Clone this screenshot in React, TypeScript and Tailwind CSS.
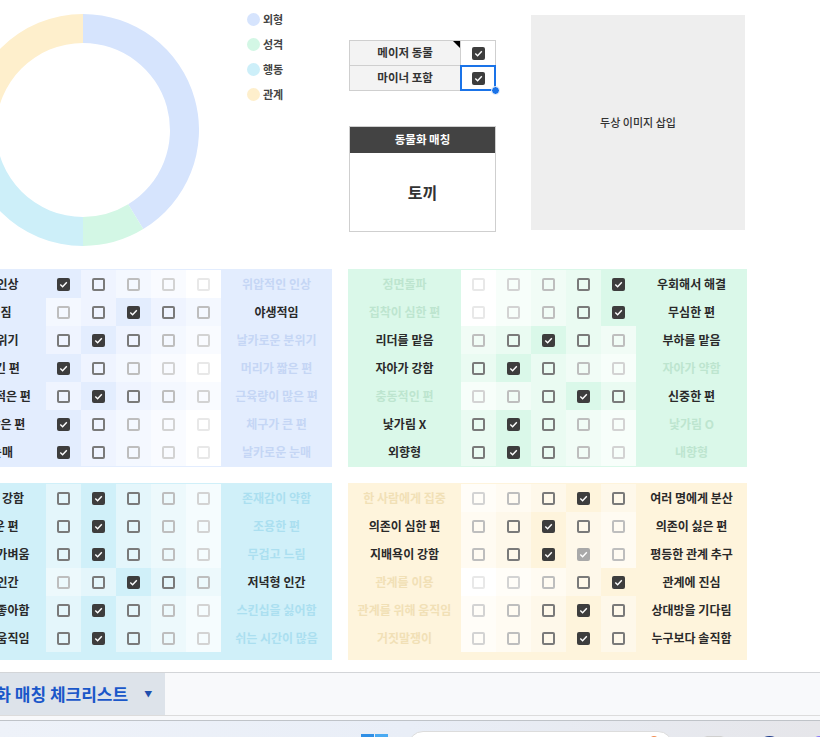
import React from "react";

type Row = { left: string; right: string; pick: number; ghost?: number };

type Tone = { block: string; faded: string; cell: string[] };

const TONES: Record<string, Tone> = {
  blue: {
    block: "bg-[#e3edfe]",
    faded: "text-[#c5d6f5]",
    cell: ["bg-[#e3edfe]", "bg-[#eff4ff]", "bg-[#f4f8ff]", "bg-[#f9fbff]", "bg-white"],
  },
  green: {
    block: "bg-[#daf8e9]",
    faded: "text-[#bde5cf]",
    cell: ["bg-[#daf8e9]", "bg-[#eafbf2]", "bg-[#f1fcf6]", "bg-[#f7fefa]", "bg-white"],
  },
  cyan: {
    block: "bg-[#d0f0f9]",
    faded: "text-[#abdff0]",
    cell: ["bg-[#d0f0f9]", "bg-[#e4f6fb]", "bg-[#edf9fc]", "bg-[#f5fcfe]", "bg-white"],
  },
  yellow: {
    block: "bg-[#fef4dc]",
    faded: "text-[#f1e0b6]",
    cell: ["bg-[#fef4dc]", "bg-[#fef8ea]", "bg-[#fffbf2]", "bg-[#fffdf8]", "bg-white"],
  },
};

// 체크 거리별 테두리 색
const EDGE = ["", "border-[#7a7a7a]", "border-[#bebebe]", "border-[#d3d3d3]", "border-[#e8e8e8]"];

const LOOKS: Row[] = [
  { left: "귀여운 인상", right: "위압적인 인상", pick: 0 },
  { left: "길들여짐", right: "야생적임", pick: 2 },
  { left: "순한 분위기", right: "날카로운 분위기", pick: 1 },
  { left: "머리가 긴 편", right: "머리가 짧은 편", pick: 0 },
  { left: "근육량이 적은 편", right: "근육량이 많은 편", pick: 1 },
  { left: "체구가 작은 편", right: "체구가 큰 편", pick: 0 },
  { left: "둥근 눈매", right: "날카로운 눈매", pick: 0 },
];

const NATURE: Row[] = [
  { left: "정면돌파", right: "우회해서 해결", pick: 4 },
  { left: "집착이 심한 편", right: "무심한 편", pick: 4 },
  { left: "리더를 맡음", right: "부하를 맡음", pick: 2 },
  { left: "자아가 강함", right: "자아가 약함", pick: 1 },
  { left: "충동적인 편", right: "신중한 편", pick: 3 },
  { left: "낯가림 X", right: "낯가림 O", pick: 1 },
  { left: "외향형", right: "내향형", pick: 1 },
];

const ACTION: Row[] = [
  { left: "존재감이 강함", right: "존재감이 약함", pick: 1 },
  { left: "시끄러운 편", right: "조용한 편", pick: 1 },
  { left: "재빠르고 가벼움", right: "무겁고 느림", pick: 1 },
  { left: "아침형 인간", right: "저녁형 인간", pick: 2 },
  { left: "스킨십을 좋아함", right: "스킨십을 싫어함", pick: 1 },
  { left: "부지런히 움직임", right: "쉬는 시간이 많음", pick: 1 },
];

const BOND: Row[] = [
  { left: "한 사람에게 집중", right: "여러 명에게 분산", pick: 3 },
  { left: "의존이 심한 편", right: "의존이 싫은 편", pick: 2 },
  { left: "지배욕이 강함", right: "평등한 관계 추구", pick: 2, ghost: 3 },
  { left: "관계를 이용", right: "관계에 진심", pick: 4 },
  { left: "관계를 위해 움직임", right: "상대방을 기다림", pick: 3 },
  { left: "거짓말쟁이", right: "누구보다 솔직함", pick: 3 },
];

const LEGEND = [
  { label: "외형", dot: "bg-[#d6e4fd]" },
  { label: "성격", dot: "bg-[#d3f7e5]" },
  { label: "행동", dot: "bg-[#cdeff9]" },
  { label: "관계", dot: "bg-[#feefcc]" },
];

function slice(a0: number, a1: number) {
  const R = 116;
  const r = 87;
  const c = 116;
  const p = (rad: number, a: number) => {
    const t = (a * Math.PI) / 180;
    return `${c + rad * Math.sin(t)} ${c - rad * Math.cos(t)}`;
  };
  const large = a1 - a0 > 180 ? 1 : 0;
  return `M ${p(R, a0)} A ${R} ${R} 0 ${large} 1 ${p(R, a1)} L ${p(r, a1)} A ${r} ${r} 0 ${large} 0 ${p(r, a0)} Z`;
}

function Tick({ grey }: { grey?: boolean }) {
  return (
    <span
      className={`w-[13px] h-[13px] rounded-[2px] flex items-center justify-center ${
        grey ? "bg-[#a9a9a9]" : "bg-[#3d3d3d]"
      }`}
    >
      <svg width="9" height="9" viewBox="0 0 9 9">
        <path d="M1.3 4.6 L3.6 6.8 L7.8 2.3" fill="none" stroke="#fff" strokeWidth="1.4" />
      </svg>
    </span>
  );
}

function Grid({ tone, rows, tall }: { tone: Tone; rows: Row[]; tall?: boolean }) {
  return (
    <div className={`w-[399px] ${tone.block} ${tall ? "py-px" : "pt-px pb-[8px]"}`}>
      {rows.map((r) => (
        <div key={r.left} className="grid grid-cols-[113px_repeat(5,35px)_111px] h-[28px]">
          <div
            className={`flex items-center justify-center whitespace-nowrap ${
              r.pick > 2 ? tone.faded : "text-[#2a2a2a]"
            }`}
          >
            {r.left}
          </div>
          {[0, 1, 2, 3, 4].map((i) => {
            const d = Math.abs(i - r.pick);
            return (
              <div key={i} className={`flex items-center justify-center ${tone.cell[d]}`}>
                {d === 0 ? (
                  <Tick />
                ) : i === r.ghost ? (
                  <Tick grey />
                ) : (
                  <span className={`w-[13px] h-[13px] rounded-[2px] border-2 ${EDGE[d]}`} />
                )}
              </div>
            );
          })}
          <div
            className={`flex items-center justify-center whitespace-nowrap ${
              r.pick < 2 ? tone.faded : "text-[#2a2a2a]"
            }`}
          >
            {r.right}
          </div>
        </div>
      ))}
    </div>
  );
}

export default function App() {
  return (
    <div className="w-[820px] h-[737px] overflow-hidden bg-white flex flex-col font-['Noto_Sans_CJK_KR','Noto_Sans',sans-serif]">
      {/* Sheet */}
      <div className="h-[672px] overflow-hidden">
        <div className="ml-[-67px] flex flex-col text-[12px] font-bold">
          {/* Top: chart, legend, toggles, image */}
          <div className="flex h-[269px] items-start">
            <svg width="232" height="232" viewBox="0 0 232 232" className="ml-[34px] mt-[14px] shrink-0">
              <path d={slice(0, 148.7)} fill="#d6e4fd" />
              <path d={slice(148.7, 180)} fill="#d3f7e5" />
              <path d={slice(180, 270)} fill="#cdeff9" />
              <path d={slice(270, 360)} fill="#feefcc" />
            </svg>

            <div className="ml-[48px] mt-[7px] w-[55px] flex flex-col">
              {LEGEND.map((l) => (
                <div key={l.label} className="h-[25px] flex items-center gap-[3px]">
                  <span className={`w-[13px] h-[13px] rounded-full ${l.dot}`} />
                  <span className="text-[11px] text-[#444]">{l.label}</span>
                </div>
              ))}
            </div>

            <div className="ml-[47px] w-[147px] flex flex-col">
              <div className="mt-[40px] border-l border-t border-[#cfcfcf] text-[11.5px] text-[#333]">
                <div className="flex h-[25px]">
                  <div className="relative w-[112px] bg-[#f3f3f3] border-r border-b border-[#cfcfcf] flex items-center justify-center">
                    메이저 동물
                    <span className="absolute top-0 right-0 border-l-[7px] border-l-transparent border-t-[7px] border-t-black" />
                  </div>
                  <div className="w-[35px] border-r border-b border-[#cfcfcf] flex items-center justify-center">
                    <Tick />
                  </div>
                </div>
                <div className="flex h-[25px]">
                  <div className="w-[112px] bg-[#f3f3f3] border-r border-b border-[#cfcfcf] flex items-center justify-center">
                    마이너 포함
                  </div>
                  <div className="relative w-[35px] border-r border-b border-[#cfcfcf] flex items-center justify-center">
                    <Tick />
                    <span className="absolute -left-px -top-px -right-px -bottom-px border-2 border-[#1a73e8]" />
                    <span className="absolute right-[-5px] bottom-[-5px] w-[9px] h-[9px] rounded-full bg-[#1a73e8] border border-white" />
                  </div>
                </div>
              </div>

              <div className="mt-[35px] border border-[#cfcfcf] flex flex-col">
                <div className="h-[26px] bg-[#434343] text-white text-[11.5px] flex items-center justify-center">
                  동물화 매칭
                </div>
                <div className="h-[78px] flex items-center justify-center text-[16px] text-[#333]">
                  토끼
                </div>
              </div>
            </div>

            <div className="ml-[35px] mt-[15px] w-[214px] h-[215px] bg-[#eeeeee] flex items-center justify-center text-[11px] font-medium text-[#333]">
              두상 이미지 삽입
            </div>
          </div>

          {/* 외형 / 성격 */}
          <div className="flex gap-[16px]">
            <Grid tone={TONES.blue} rows={LOOKS} tall />
            <Grid tone={TONES.green} rows={NATURE} tall />
          </div>

          {/* 행동 / 관계 */}
          <div className="flex gap-[16px] mt-[16px]">
            <Grid tone={TONES.cyan} rows={ACTION} />
            <Grid tone={TONES.yellow} rows={BOND} />
          </div>
        </div>
      </div>

      {/* Sheet tabs */}
      <div className="h-[43px] border-t border-[#d3d5d8] bg-[#f8f9fb] flex">
        <div className="ml-[-44px] pl-[8px] pr-[13px] bg-[#dde3ea] flex items-center gap-[16px] text-[17px] font-bold text-[#1a57c9] whitespace-nowrap">
          동물화 매칭 체크리스트
          <span className="text-[8px] text-[#1f4fae]">▼</span>
        </div>
      </div>
      <div className="h-[5px] border-t border-[#dcdcdc] bg-[#f8f9fb]" />

      {/* Taskbar */}
      <div className="flex-1 border-t border-[#bfc3c8] bg-gradient-to-r from-[#eef2f9] via-[#e9eef7] to-[#e6e6ea] flex items-start overflow-hidden">
        <div className="ml-[361px] mt-[13px] grid grid-cols-2 gap-px w-[27px] shrink-0">
          <span className="h-[13px] bg-[#2f8fe6]" />
          <span className="h-[13px] bg-[#4aaaf2]" />
          <span className="h-[13px] bg-[#2f8fe6]" />
          <span className="h-[13px] bg-[#4aaaf2]" />
        </div>
        <div className="ml-[20px] mt-[10px] w-[265px] h-[30px] rounded-full bg-white border border-[#dcdcdc] flex items-start justify-end pr-[13px] shrink-0">
          <span className="mt-[4px] w-[10px] h-[10px] rounded-full bg-[#f28b50]" />
        </div>
        <span className="ml-[30px] mt-[15px] w-[22px] h-[22px] rounded-[4px] bg-white border border-[#d0d0d0] shrink-0" />
        <span className="ml-[32px] mt-[15px] w-[25px] h-[25px] rounded-full bg-[#1e3a8a] shrink-0" />
        <span className="ml-[31px] mt-[15px] w-[25px] h-[25px] rounded-[6px] bg-[#8b7cf6] shrink-0" />
      </div>
    </div>
  );
}
